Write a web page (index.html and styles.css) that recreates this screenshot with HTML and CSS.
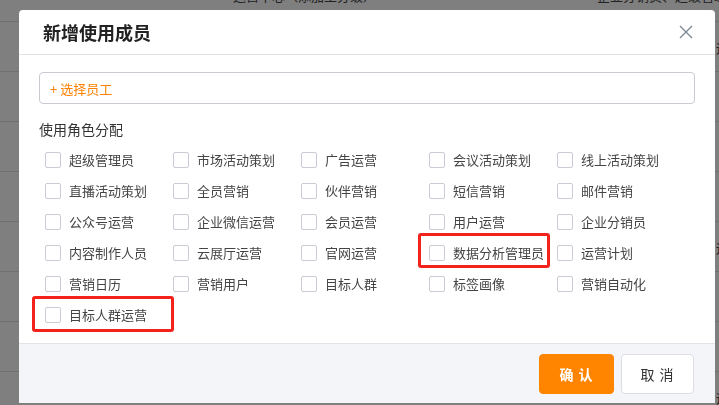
FILE: index.html
```html
<html>
  <head>
    <meta charset="utf-8">
    <link rel="stylesheet" href="styles.css">
  </head>
  <body>
    <div class="page">
      <div class="row"><span class="cell c1">运营中心（添加主分级）</span><span class="cell c2">企业分销员、超级管理员</span></div>
      <div class="row"><span class="cell c3">运营</span></div>
      <div class="row"></div>
      <div class="row"></div>
      <div class="row"></div>
      <div class="row"><span class="cell c3">运营</span></div>
      <div class="row"></div>
      <div class="row"></div>
      <div class="row"><span class="cell c3">运营</span></div>
    </div>
    <div class="mask"></div>

    <div class="dialog">
      <div class="dialog-header">
        <h3>新增使用成员</h3>
        <button class="close" type="button">
          <svg width="14" height="14" viewBox="0 0 14 14"><path d="M1 1 L13 13 M13 1 L1 13" stroke="#7f8792" stroke-width="1.4" fill="none"/></svg>
        </button>
      </div>
      <div class="dialog-body">
        <div class="picker">+ 选择员工</div>
        <div class="field-label">使用角色分配</div>
        <div class="roles">
          <label class="role"><span class="box"></span>超级管理员</label>
          <label class="role"><span class="box"></span>市场活动策划</label>
          <label class="role"><span class="box"></span>广告运营</label>
          <label class="role"><span class="box"></span>会议活动策划</label>
          <label class="role"><span class="box"></span>线上活动策划</label>

          <label class="role"><span class="box"></span>直播活动策划</label>
          <label class="role"><span class="box"></span>全员营销</label>
          <label class="role"><span class="box"></span>伙伴营销</label>
          <label class="role"><span class="box"></span>短信营销</label>
          <label class="role"><span class="box"></span>邮件营销</label>

          <label class="role"><span class="box"></span>公众号运营</label>
          <label class="role"><span class="box"></span>企业微信运营</label>
          <label class="role"><span class="box"></span>会员运营</label>
          <label class="role"><span class="box"></span>用户运营</label>
          <label class="role"><span class="box"></span>企业分销员</label>

          <label class="role"><span class="box"></span>内容制作人员</label>
          <label class="role"><span class="box"></span>云展厅运营</label>
          <label class="role"><span class="box"></span>官网运营</label>
          <label class="role mark mark-a"><span class="box"></span>数据分析管理员</label>
          <label class="role"><span class="box"></span>运营计划</label>

          <label class="role"><span class="box"></span>营销日历</label>
          <label class="role"><span class="box"></span>营销用户</label>
          <label class="role"><span class="box"></span>目标人群</label>
          <label class="role"><span class="box"></span>标签画像</label>
          <label class="role"><span class="box"></span>营销自动化</label>

          <label class="role mark mark-b"><span class="box"></span>目标人群运营</label>
        </div>
      </div>
      <div class="dialog-footer">
        <button class="btn btn-primary" type="button">确 认</button>
        <button class="btn" type="button">取 消</button>
      </div>
    </div>
  </body>
</html>
```

FILE: styles.css
```css
html, body {
  margin: 0;
  padding: 0;
  height: 100%;
  overflow: hidden;
  font-family: "Noto Sans CJK SC", "Noto Sans", sans-serif;
  background: #fff;
}

/* page behind the modal */
.page {
  margin-top: -28px;
}

.row {
  position: relative;
  height: 49px;
  border-bottom: 1px solid #dedede;
  font-size: 13px;
  color: #444;
}

.cell {
  position: absolute;
  top: 14px;
  white-space: nowrap;
}

.c1 { left: 233px; }
.c2 { left: 597px; }
.c3 { left: 716px; top: 16px; }

.mask {
  position: fixed;
  inset: 0;
  background: rgba(0, 0, 0, 0.5);
}

/* modal */
.dialog {
  position: absolute;
  top: 10px;
  left: 19px;
  width: 696px;
  height: 393px;
  background: #fff;
  border-radius: 4px 4px 0 0;
  display: flex;
  flex-direction: column;
  overflow: hidden;
}

.dialog-header {
  height: 44px;
  border-bottom: 1px solid #e2e3e8;
  display: flex;
  align-items: center;
  justify-content: space-between;
  padding: 0 20px 0 24px;
}

.dialog-header h3 {
  margin: 0;
  font-size: 18px;
  font-weight: 700;
  color: #222;
}

.close {
  border: none;
  background: none;
  padding: 0;
  width: 14px;
  height: 14px;
  margin-right: 2px;
  cursor: pointer;
}

.close svg {
  display: block;
}

.dialog-body {
  flex: 1;
  padding: 17px 20px 0 20px;
}

.picker {
  height: 30px;
  border: 1px solid #c9cbd2;
  border-radius: 4px;
  display: flex;
  align-items: center;
  padding-left: 10px;
  font-size: 13px;
  color: #ff8000;
  white-space: pre;
}

.field-label {
  margin-top: 15px;
  line-height: 20px;
  font-size: 14px;
  color: #333;
}

.roles {
  margin-top: 5px;
  padding-left: 6px;
  display: grid;
  grid-template-columns: repeat(5, 128px);
  grid-auto-rows: 31px;
}

.role {
  position: relative;
  display: flex;
  align-items: center;
  gap: 8px;
  font-size: 13px;
  color: #444;
  white-space: nowrap;
}

.box {
  width: 14px;
  height: 14px;
  border: 1px solid #c9ccd4;
  border-radius: 2px;
  background: #fff;
  flex: none;
}

/* red annotation frames */
.mark::after {
  content: "";
  position: absolute;
  border: 3px solid #f5221b;
  border-radius: 3px;
}

.mark-a::after {
  left: -11px;
  top: -4px;
  width: 126px;
  height: 29px;
}

.mark-b::after {
  left: -13px;
  top: -3px;
  width: 136px;
  height: 30px;
}

.dialog-footer {
  height: 60px;
  border-top: 1px solid #e2e3e8;
  background: #f4f5f9;
  display: flex;
  justify-content: flex-end;
  align-items: flex-start;
  gap: 7px;
  padding: 10px 21px 0 0;
  box-sizing: border-box;
}

.btn {
  width: 73px;
  height: 40px;
  border: 1px solid #dcdee4;
  border-radius: 4px;
  background: #fff;
  font-family: inherit;
  font-size: 14px;
  color: #333;
  letter-spacing: 1px;
  cursor: pointer;
}

.btn-primary {
  width: 75px;
  border-color: #ff8400;
  background: #ff8400;
  color: #fff;
  font-weight: 700;
}
```
